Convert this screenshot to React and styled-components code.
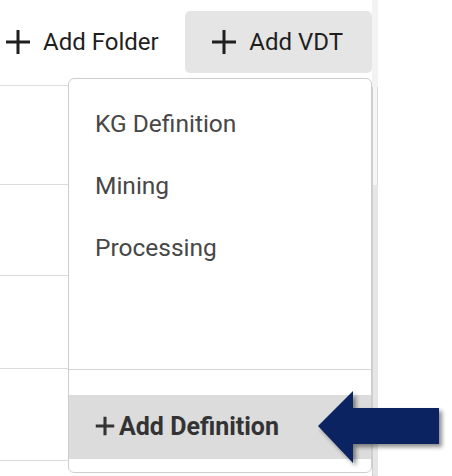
import React from "react";
import styled, { createGlobalStyle } from "styled-components";

const Global = createGlobalStyle`
  html, body { margin: 0; padding: 0; background: #fff; }
  body { width: 452px; height: 476px; overflow: hidden; font-family: Roboto, "Liberation Sans", Arial, sans-serif; }
`;

const Page = styled.div`
  position: relative;
  width: 452px;
  height: 476px;
  display: flex;
`;

const Frame = styled.div`
  width: 378px;
  height: 476px;
  display: flex;
`;

const Main = styled.div`
  width: 372px;
  display: flex;
  flex-direction: column;
`;

const Toolbar = styled.div`
  height: 86px;
  display: flex;
  align-items: flex-start;
  justify-content: space-between;
  padding-top: 11px;
  box-sizing: border-box;
  border-bottom: 1px solid #dcdcdc;
`;

const ToolButton = styled.button`
  display: flex;
  align-items: center;
  gap: 12px;
  height: 62px;
  padding: 0 ${(p) => p.$pr}px 0 ${(p) => p.$pl}px;
  border: none;
  border-radius: 5px;
  background: ${(p) => (p.$active ? "#e5e5e5" : "transparent")};
  font-family: Roboto, "Liberation Sans", Arial, sans-serif;
  font-size: 24px;
  color: #1f1f1f;
  cursor: pointer;
`;

const Row = styled.div`
  height: ${(p) => p.$h}px;
  box-sizing: border-box;
  border-bottom: 1px solid #dcdcdc;
`;

const Scroll = styled.div`
  width: 6px;
  display: flex;
  flex-direction: column;
`;

const ScrollTop = styled.div`
  height: 87px;
  background: #f3f3f3;
`;

const ScrollThumb = styled.div`
  height: 98px;
  background: #f7f7f7;
  border-left: 1px solid #cfcfcf;
  border-right: 1px solid #d9d9d9;
  box-sizing: border-box;
`;

const ScrollTrack = styled.div`
  flex: 1;
  background: #e6e6e6;
  border-left: 1px solid #cfcfcf;
  box-sizing: border-box;
`;

const Menu = styled.div`
  position: absolute;
  left: 68px;
  top: 78px;
  width: 304px;
  height: 395px;
  box-sizing: border-box;
  background: #fff;
  border: 1px solid #cdcdcd;
  border-radius: 6px;
  display: flex;
  flex-direction: column;
`;

const MenuList = styled.div`
  flex: 1;
  padding-top: 13px;
  display: flex;
  flex-direction: column;
`;

const MenuItem = styled.div`
  height: 62px;
  display: flex;
  align-items: center;
  padding-left: 26px;
  font-size: 24.5px;
  color: #474747;
`;

const MenuFooter = styled.div`
  border-top: 1px solid #d4d4d4;
  padding: 25px 0 13px;
`;

const AddDef = styled.div`
  height: 64px;
  background: #dcdcdc;
  display: flex;
  align-items: center;
  gap: 4px;
  padding-left: 26px;
  padding-bottom: 2px;
  box-sizing: border-box;
  font-size: 25px;
  font-weight: 700;
  color: #333;
`;

const Arrow = styled.svg`
  position: absolute;
  left: 316px;
  top: 389px;
  filter: drop-shadow(3px 3px 2px rgba(0, 0, 0, 0.45));
`;

const Plus = ({ size = 26, w = 3, color = "#1f1f1f" }) => (
  <svg width={size} height={size} viewBox="0 0 26 26">
    <path d="M13 1v24M1 13h24" stroke={color} strokeWidth={w} />
  </svg>
);

const rows = [99, 91, 93, 92];

export default function App() {
  return (
    <Page>
      <Global />
      <Frame>
        <Main>
          <Toolbar>
            <ToolButton $pl={5} $pr={0}>
              <Plus />
              Add Folder
            </ToolButton>
            <ToolButton $active $pl={26} $pr={29}>
              <Plus />
              Add VDT
            </ToolButton>
          </Toolbar>
          {rows.map((h, i) => (
            <Row key={i} $h={h} />
          ))}
        </Main>
        <Scroll>
          <ScrollTop />
          <ScrollThumb />
          <ScrollTrack />
        </Scroll>
      </Frame>
      <Menu>
        <MenuList>
          <MenuItem>KG Definition</MenuItem>
          <MenuItem>Mining</MenuItem>
          <MenuItem>Processing</MenuItem>
        </MenuList>
        <MenuFooter>
          <AddDef>
            <Plus size={20} w={4} color="#333" />
            Add Definition
          </AddDef>
        </MenuFooter>
      </Menu>
      <Arrow width="130" height="80" viewBox="0 0 130 80">
        <polygon points="2,37 37,2 37,19 123,19 123,55 37,55 37,74" fill="#0b2360" />
      </Arrow>
    </Page>
  );
}
